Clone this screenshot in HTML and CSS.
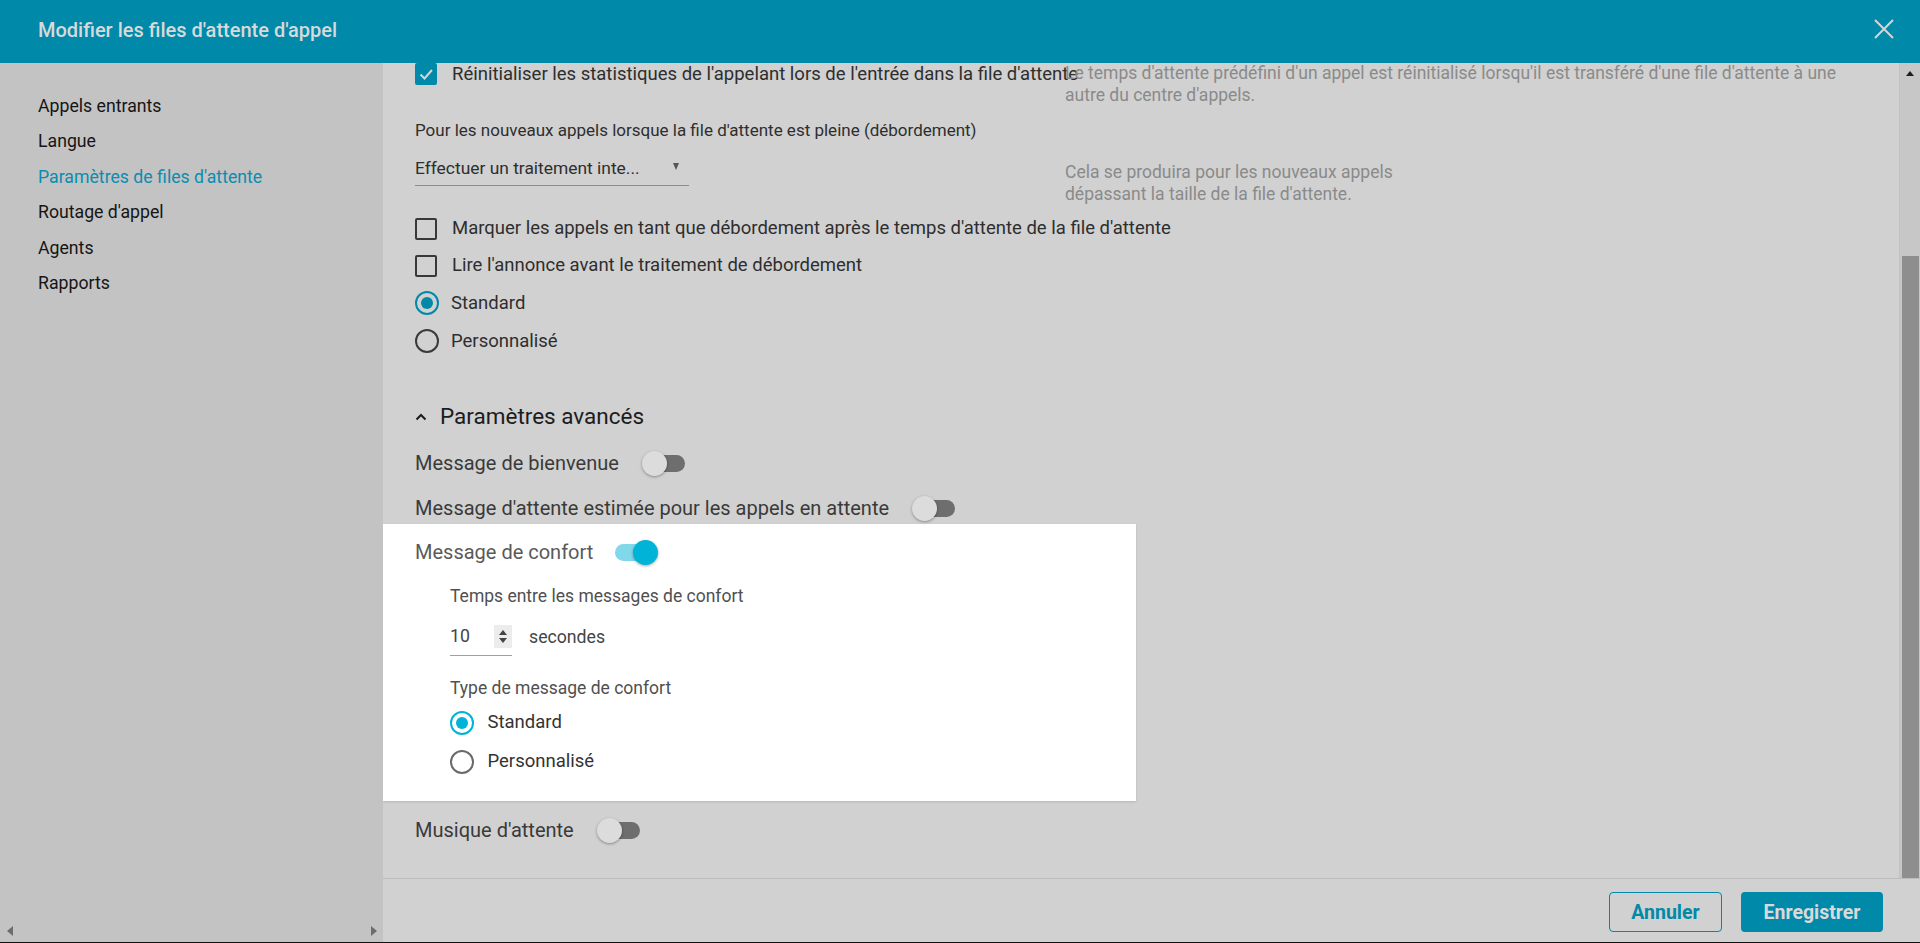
FILE: index.html
```html
<!doctype html>
<html lang="fr">
  <head>
    <meta charset="utf-8">
    <title>Modifier les files d'attente d'appel</title>
    <link rel="stylesheet" href="styles.css">
  </head>
  <body>

    <div class="dialog">
      <div class="bar">
        <h1>Modifier les files d'attente d'appel</h1>
        <span class="close" title="Fermer">
          <svg width="20" height="20" viewBox="0 0 20 20"><path d="M1 1 L19 19 M19 1 L1 19" stroke="currentColor" stroke-width="2" fill="none"/></svg>
        </span>
      </div>

      <div class="body">
        <nav class="side">
          <ul>
            <li>Appels entrants</li>
            <li>Langue</li>
            <li class="active">Paramètres de files d'attente</li>
            <li>Routage d'appel</li>
            <li>Agents</li>
            <li>Rapports</li>
          </ul>
          <div class="hscroll"><span class="arr-left"></span><span class="arr-right"></span></div>
        </nav>

        <div class="main">
          <div class="pane">
            <div class="content">

              <div class="field">
                <label class="check">
                  <span class="box on"><svg width="16" height="16" viewBox="0 0 16 16"><path d="M2.5 8.5 L6.5 12.5 L14 4" stroke="currentColor" stroke-width="2" fill="none"/></svg></span>
                  Réinitialiser les statistiques de l'appelant lors de l'entrée dans la file d'attente
                </label>
                <p class="help first">Le temps d'attente prédéfini d'un appel est réinitialisé lorsqu'il est transféré d'une file d'attente à une autre du centre d'appels.</p>
              </div>

              <p class="lead">Pour les nouveaux appels lorsque la file d'attente est pleine (débordement)</p>

              <div class="field overflow">
                <div class="select">Effectuer un traitement inte...<span class="caret"></span></div>
                <p class="help">Cela se produira pour les nouveaux appels<br>dépassant la taille de la file d'attente.</p>
              </div>

              <div class="options">
                <label class="check opt"><span class="box"></span>Marquer les appels en tant que débordement après le temps d'attente de la file d'attente</label>
                <label class="check opt"><span class="box"></span>Lire l'annonce avant le traitement de débordement</label>
                <label class="radio opt"><span class="ring on"></span>Standard</label>
                <label class="radio opt"><span class="ring"></span>Personnalisé</label>
              </div>

              <h2 class="section">
                <svg width="12" height="8" viewBox="0 0 12 8"><path d="M1.5 6.5 L6 2 L10.5 6.5" stroke="currentColor" stroke-width="2" fill="none"/></svg>
                Paramètres avancés
              </h2>

              <div class="switch first">Message de bienvenue <span class="toggle"></span></div>
              <div class="switch">Message d'attente estimée pour les appels en attente <span class="toggle"></span></div>

              <div class="card">
                <div class="switch">Message de confort <span class="toggle on"></span></div>
                <div class="sub">
                  <p class="sub-label">Temps entre les messages de confort</p>
                  <div class="amount">
                    <div class="num">10<span class="spin"><span class="up"></span><span class="down"></span></span></div>
                    secondes
                  </div>
                  <p class="sub-label type">Type de message de confort</p>
                  <div class="choices">
                    <label class="radio"><span class="ring on"></span>Standard</label>
                    <label class="radio"><span class="ring"></span>Personnalisé</label>
                  </div>
                </div>
              </div>

              <div class="switch last">Musique d'attente <span class="toggle"></span></div>

            </div>
            <div class="vscroll"><span class="arr-up"></span><span class="thumb"></span></div>
          </div>

          <div class="foot">
            <button class="btn ghost">Annuler</button>
            <button class="btn primary">Enregistrer</button>
          </div>
        </div>
      </div>
    </div>

  </body>
</html>
```

FILE: styles.css
```css
* {
  box-sizing: border-box;
}

html, body {
  margin: 0;
  padding: 0;
}
body {
  background: #111;
  color: #2e2e2e;
  font: 17px/1.3 Roboto, "Liberation Sans", Arial, sans-serif;
  overflow: hidden;
}
p {
  margin: 0;
}

.dialog {
  background: #d1d1d1;
  display: flex;
  flex-direction: column;
  height: 942px;
}

/* title bar */
.bar {
  align-items: center;
  background: #0089a9;
  color: #d9d9d9;
  display: flex;
  flex: none;
  height: 63px;
  justify-content: space-between;
  padding: 0 26px 0 38px;
}
.bar h1 {
  font-size: 20px;
  font-weight: 500;
  margin: 0 0 3px;
}
.close {
  color: #d6d6d6;
  display: flex;
  margin-bottom: 6px;
}

.body {
  display: flex;
  flex: 1;
  min-height: 0;
}

/* side menu */
.side {
  background: #c3c3c3;
  display: flex;
  flex: none;
  flex-direction: column;
  width: 383px;
}
.side ul {
  flex: 1;
  list-style: none;
  margin: 0;
  padding: 26px 0 0 38px;
}
.side li {
  color: #151515;
  font-size: 17.7px;
  height: 35.4px;
  line-height: 35.4px;
}
.side li.active {
  color: #0a8db0;
}
.hscroll {
  align-items: center;
  display: flex;
  height: 18px;
  justify-content: space-between;
  padding: 0 6px 4px 7px;
}
.arr-left, .arr-right {
  border-bottom: 5px solid transparent;
  border-top: 5px solid transparent;
}
.arr-left {
  border-right: 6px solid #6c6c6c;
}
.arr-right {
  border-left: 6px solid #6c6c6c;
}

/* main area */
.main {
  display: flex;
  flex: 1;
  flex-direction: column;
  min-width: 0;
}
.pane {
  display: flex;
  flex: 1;
  min-height: 0;
}
.content {
  flex: 1;
  overflow: hidden;
  padding-left: 32px;
}

.vscroll {
  align-items: center;
  background: #c7c7c7;
  border-left: 1px solid #c2c2c2;
  display: flex;
  flex: none;
  flex-direction: column;
  width: 21px;
}
.arr-up {
  border-bottom: 5px solid #1e1e1e;
  border-left: 4px solid transparent;
  border-right: 4px solid transparent;
  margin-top: 8px;
}
.thumb {
  background: #8e8e8e;
  flex: 1;
  margin-top: 180px;
  width: 17px;
}

/* fields */
.field {
  display: grid;
  grid-template-columns: 650px 1fr;
}
.help {
  color: #8a8a8a;
  font-size: 17.5px;
  line-height: 22px;
  max-width: 790px;
}
.help.first {
  margin-top: -1px;
}
.overflow {
  margin-top: 11px;
}
.overflow .help {
  margin-top: 9px;
}

.check, .radio {
  align-items: center;
  display: flex;
  font-size: 18.5px;
  white-space: nowrap;
}
.check {
  gap: 15px;
  height: 22px;
}
.box {
  border: 2px solid #383838;
  border-radius: 2px;
  color: #d6d6d6;
  display: flex;
  align-items: center;
  justify-content: center;
  flex: none;
  height: 22px;
  width: 22px;
}
.box.on {
  background: #0089a9;
  border-color: #0089a9;
}

.lead {
  line-height: 22px;
  margin-top: 13px;
}

.select {
  align-items: center;
  border-bottom: 1px solid #8c8c8c;
  display: flex;
  font-size: 17.4px;
  height: 34px;
  justify-content: space-between;
  padding-right: 10px;
  width: 274px;
}
.caret {
  border-left: 3.5px solid transparent;
  border-right: 3.5px solid transparent;
  border-top: 7px solid #555;
  margin-bottom: 4px;
}

.options {
  margin-top: 5px;
}
.opt {
  height: 37px;
}
.radio.opt {
  height: 38px;
}
.radio {
  gap: 12px;
}
.ring {
  border: 2.5px solid #3a3a3a;
  border-radius: 50%;
  display: flex;
  align-items: center;
  justify-content: center;
  flex: none;
  height: 24px;
  width: 24px;
}
.ring.on {
  border-color: #0089a9;
}
.ring.on::after {
  background: #0089a9;
  border-radius: 50%;
  content: '';
  height: 12px;
  width: 12px;
}

.section {
  align-items: center;
  color: #1c1c1c;
  display: flex;
  font-size: 22.5px;
  font-weight: normal;
  gap: 13px;
  height: 30px;
  margin: 42px 0 0;
}

/* switches */
.switch {
  align-items: center;
  color: #3a3a3a;
  display: flex;
  font-size: 20px;
  height: 32px;
  margin-top: 13px;
}
.switch.first {
  margin-top: 15px;
}
.switch.last {
  margin-top: 13px;
}
.toggle {
  flex: none;
  height: 25px;
  margin-left: 23px;
  position: relative;
  width: 43px;
}
.toggle::before {
  background: #6e6e6e;
  border-radius: 9px;
  content: '';
  height: 17px;
  left: 1px;
  position: absolute;
  top: 4px;
  width: 42px;
}
.toggle::after {
  background: #dcdcdc;
  border-radius: 50%;
  box-shadow: 0 1px 3px rgba(0, 0, 0, 0.35);
  content: '';
  height: 25px;
  left: 0;
  position: absolute;
  top: 0;
  width: 25px;
}
.toggle.on::before {
  background: #80d8ea;
}
.toggle.on::after {
  background: #00b3d7;
  left: 19px;
}

/* highlighted card */
.card {
  background: #fff;
  box-shadow: 0 1px 2px rgba(0, 0, 0, 0.12);
  margin-left: -32px;
  padding: 12px 0 20px 32px;
  width: 753px;
}
.card .switch {
  color: #5a5a5a;
  margin-top: 0;
}
.card .toggle {
  margin-left: 21px;
}
.sub {
  padding-left: 35px;
}
.sub-label {
  color: #505050;
  font-size: 17.5px;
  line-height: 22px;
  margin-top: 17px;
}
.sub-label.type {
  margin-top: 21px;
}
.amount {
  align-items: center;
  color: #444;
  display: flex;
  font-size: 17.7px;
  gap: 17px;
  margin-top: 11px;
}
.num {
  align-items: center;
  border-bottom: 1px solid #a0a0a0;
  display: flex;
  height: 38px;
  justify-content: space-between;
  width: 62px;
}
.spin {
  align-items: center;
  background: #ececec;
  display: flex;
  flex-direction: column;
  gap: 3px;
  height: 23px;
  justify-content: center;
  width: 18px;
}
.spin .up, .spin .down {
  border-left: 4px solid transparent;
  border-right: 4px solid transparent;
}
.spin .up {
  border-bottom: 5px solid #444;
}
.spin .down {
  border-top: 5px solid #444;
}
.choices {
  margin-top: 4px;
}
.choices .radio {
  color: #333;
  gap: 13.5px;
  height: 39px;
}
.card .ring {
  border-color: #6a6a6a;
}
.card .ring.on {
  border-color: #00b3d7;
}
.card .ring.on::after {
  background: #00b3d7;
}

/* footer */
.foot {
  align-items: flex-start;
  border-top: 1px solid #bcbcbc;
  display: flex;
  flex: none;
  gap: 19px;
  height: 64px;
  justify-content: flex-end;
  padding: 13px 37px 0 0;
}
.btn {
  border-radius: 4px;
  cursor: pointer;
  font: bold 19.5px Roboto, "Liberation Sans", Arial, sans-serif;
  height: 40px;
}
.ghost {
  background: transparent;
  border: 1px solid #0089a9;
  color: #0089a9;
  width: 113px;
}
.primary {
  background: #0089a9;
  border: none;
  color: #d9d9d9;
  width: 142px;
}
```
